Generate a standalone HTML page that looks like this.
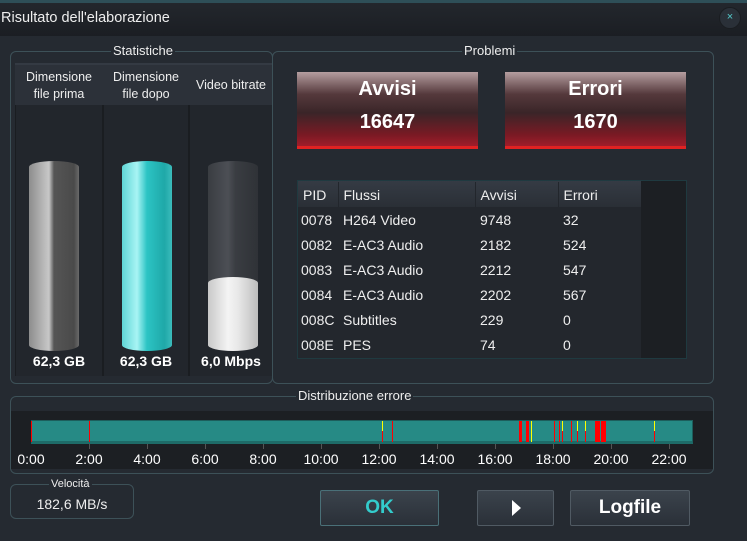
<!DOCTYPE html>
<html><head><meta charset="utf-8"><style>
*{margin:0;padding:0;box-sizing:border-box}
body{width:747px;height:541px;background:#252a31;font-family:"Liberation Sans",sans-serif;color:#fff;position:relative;overflow:hidden}
.a{position:absolute}
.grp{position:absolute;border:1px solid #3d5158;border-radius:6px}
.lg{position:absolute;background:#252a31;padding:0 2px;font-size:13px;top:-9px;white-space:nowrap;color:#eee}
.hd{position:absolute;background:#2c3139;border-top:2px solid #343a43;font-size:12.5px;text-align:center;line-height:17px;color:#eee}
.col{position:absolute;background:#22262c;border-left:1px solid #1a1d21;border-right:1px solid #1a1d21}
.cyl{position:absolute;width:50px;border-radius:25px/6px}
.big{position:absolute;font-weight:bold;font-size:14px;text-align:center}
.pb{position:absolute;width:181px;height:77px;background:linear-gradient(#b59ea0 0%,#55393c 30%,#3a2528 55%,#7a1a24 85%,#a01d2a 100%);text-align:center;font-weight:bold;border-bottom:3px solid #e02222}
.pb div{font-size:20px}
table{border-collapse:collapse;font-size:14px}
td{height:25px;padding-left:5px;color:#eee}
.btn{position:absolute;height:36px;background:linear-gradient(#3b434c,#2a3038);border:1px solid #505a63;border-radius:2px;text-align:center;font-weight:bold;font-size:19px;line-height:34px}
.tk{position:absolute;font-size:14px;top:451px;transform:translateX(-50%)}
</style></head><body>
<div class="a" style="left:0;top:0;width:747px;height:36px;background:linear-gradient(#23272d,#1b1e23);border-top:3px solid #2e4f58"></div>
<div class="a" style="left:1px;top:10px;font-size:14.5px;color:#eee">Risultato dell'elaborazione</div>
<div class="a" style="left:719px;top:7px;width:22px;height:22px;border-radius:50%;background:#2a3038;border:1px solid #1a1d21;color:#5cc;font-size:11px;text-align:center;line-height:19px">×</div>

<div class="grp" style="left:10px;top:51px;width:263px;height:333px"><div class="lg" style="left:100px">Statistiche</div></div>
<div class="col" style="left:15px;top:63px;width:88px;height:313px"></div>
<div class="col" style="left:103px;top:63px;width:86px;height:313px"></div>
<div class="col" style="left:189px;top:63px;width:84px;height:313px"></div>
<div class="hd" style="left:15px;top:63px;width:88px;height:42px;padding-top:4px">Dimensione<br>file prima</div>
<div class="hd" style="left:103px;top:63px;width:86px;height:42px;padding-top:4px">Dimensione<br>file dopo</div>
<div class="hd" style="left:189px;top:63px;width:84px;height:42px;padding-top:12px">Video bitrate</div>

<div class="cyl" style="left:29px;top:161px;height:190px;background:linear-gradient(90deg,#8d8d8d,#c8c8c8 40%,#555 50%,#4a4a4a 90%,#6a6a6a)"></div>
<div class="cyl" style="left:122px;top:161px;height:190px;background:linear-gradient(90deg,#5fd6d6,#a8f4f4 30%,#2cc4c4 50%,#1fa8a8 85%,#3cbcbc)"></div>
<div class="cyl" style="left:208px;top:161px;height:190px;background:linear-gradient(90deg,#3a3d42,#4c4f55 40%,#3a3d42 55%,#2f3237)"></div>
<div class="cyl" style="left:208px;top:277px;height:74px;background:linear-gradient(90deg,#c8c8c8,#f4f4f4 40%,#e8e8e8 60%,#bdbdbd)"></div>
<div class="big" style="left:15px;top:353px;width:88px">62,3 GB</div>
<div class="big" style="left:103px;top:353px;width:86px">62,3 GB</div>
<div class="big" style="left:189px;top:353px;width:84px">6,0 Mbps</div>

<div class="grp" style="left:272px;top:51px;width:442px;height:333px"><div class="lg" style="left:189px">Problemi</div></div>
<div class="pb" style="left:297px;top:72px"><div style="margin-top:6px">Avvisi</div><div style="margin-top:10px">16647</div></div>
<div class="pb" style="left:505px;top:72px"><div style="margin-top:6px">Errori</div><div style="margin-top:10px">1670</div></div>

<div class="a" style="left:297px;top:180px;width:390px;height:179px;background:#1c1f23;border:1px solid #1f3a40"></div>
<div class="a" style="left:298px;top:181px;width:343px;height:177px;background:#23272d"></div>
<div class="a" style="left:298px;top:181px;width:343px;height:26px;background:linear-gradient(#353b44,#2a2f36)"></div>
<table class="a" style="left:298px;top:182px;width:343px">
<tr><td style="width:40px;border-right:1px solid #22262c">PID</td><td style="width:137px;border-right:1px solid #22262c">Flussi</td><td style="width:83px;border-right:1px solid #22262c">Avvisi</td><td>Errori</td></tr>
<tr><td style="padding-left:3px">0078</td><td>H264 Video</td><td>9748</td><td>32</td></tr>
<tr><td style="padding-left:3px">0082</td><td>E-AC3 Audio</td><td>2182</td><td>524</td></tr>
<tr><td style="padding-left:3px">0083</td><td>E-AC3 Audio</td><td>2212</td><td>547</td></tr>
<tr><td style="padding-left:3px">0084</td><td>E-AC3 Audio</td><td>2202</td><td>567</td></tr>
<tr><td style="padding-left:3px">008C</td><td>Subtitles</td><td>229</td><td>0</td></tr>
<tr><td style="padding-left:3px">008E</td><td>PES</td><td>74</td><td>0</td></tr>
</table>

<div class="grp" style="left:10px;top:396px;width:704px;height:78px"><div class="lg" style="left:285px">Distribuzione errore</div></div>
<div class="a" style="left:11px;top:411px;width:702px;height:58px;background:#1c1f23"></div>
<div class="a" style="left:31px;top:420px;width:662px;height:24px;background:#268a85;border:1px solid #1c5e5c;border-bottom:3px solid #1e6b68"></div>
<svg class="a" style="left:0;top:0" width="747" height="541">
<g fill="#f00">
<rect x="31" y="421" width="1" height="21"/><rect x="89" y="421" width="1" height="21"/><rect x="382" y="431" width="1" height="11"/><rect x="392" y="421" width="1" height="21"/>
<rect x="519" y="421" width="3" height="21"/><rect x="526" y="421" width="3" height="21"/><rect x="554" y="421" width="1" height="21"/><rect x="559" y="421" width="1" height="21"/><rect x="562" y="431" width="1" height="11"/><rect x="571" y="421" width="1" height="21"/><rect x="577" y="431" width="1" height="11"/><rect x="585" y="431" width="1" height="11"/><rect x="595" y="421" width="5" height="21"/><rect x="601" y="421" width="5" height="21"/><rect x="654" y="431" width="1" height="11"/></g>
<g fill="#ff0"><rect x="382" y="421" width="1" height="10"/><rect x="531" y="421" width="1" height="21"/><rect x="562" y="421" width="1" height="10"/><rect x="577" y="421" width="1" height="10"/><rect x="585" y="421" width="1" height="10"/><rect x="654" y="421" width="1" height="10"/></g>
<g fill="#555">
<rect x="89" y="444" width="1" height="5"/><rect x="147" y="444" width="1" height="5"/><rect x="205" y="444" width="1" height="5"/><rect x="263" y="444" width="1" height="5"/><rect x="321" y="444" width="1" height="5"/><rect x="379" y="444" width="1" height="5"/><rect x="437" y="444" width="1" height="5"/><rect x="495" y="444" width="1" height="5"/><rect x="553" y="444" width="1" height="5"/><rect x="611" y="444" width="1" height="5"/><rect x="669" y="444" width="1" height="5"/></g>
</svg>
<div class="tk" style="left:31px">0:00</div><div class="tk" style="left:89px">2:00</div><div class="tk" style="left:147px">4:00</div><div class="tk" style="left:205px">6:00</div><div class="tk" style="left:263px">8:00</div><div class="tk" style="left:321px">10:00</div><div class="tk" style="left:379px">12:00</div><div class="tk" style="left:437px">14:00</div><div class="tk" style="left:495px">16:00</div><div class="tk" style="left:553px">18:00</div><div class="tk" style="left:611px">20:00</div><div class="tk" style="left:669px">22:00</div>

<div class="grp" style="left:10px;top:484px;width:124px;height:35px"><div class="lg" style="left:38px;font-size:11px;top:-7px">Velocità</div>
<div class="a" style="left:0;top:11px;width:122px;text-align:center;font-size:14px;color:#eee">182,6 MB/s</div></div>
<div class="btn" style="left:320px;top:490px;width:119px;color:#3cc;border-color:#4a7078">OK</div>
<div class="btn" style="left:477px;top:490px;width:77px"><svg width="12" height="18" style="margin-top:8px"><path d="M2 1 L11 9 L2 17 Z" fill="#fff"/></svg></div>
<div class="btn" style="left:570px;top:490px;width:120px">Logfile</div>
</body></html>
